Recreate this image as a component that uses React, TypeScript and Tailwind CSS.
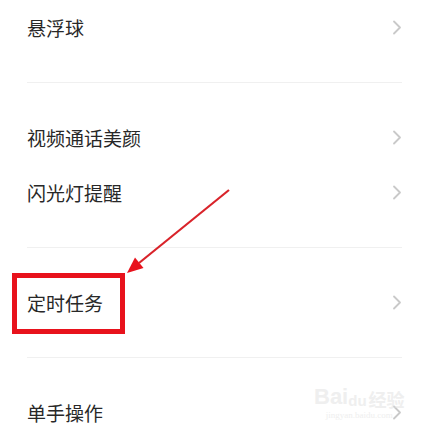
import React from 'react';

type Row = { label: string } | { divider: true };

const rows: Row[] = [
  { label: '悬浮球' },
  { divider: true },
  { label: '视频通话美颜' },
  { label: '闪光灯提醒' },
  { divider: true },
  { label: '定时任务' },
  { divider: true },
  { label: '单手操作' },
];

const Chevron: React.FC = () => (
  <svg width="10" height="15" viewBox="0 0 10 15" fill="none">
    <path d="M2 1.5 L8 7.5 L2 13.5" stroke="#c9c9c9" strokeWidth="1.8" strokeLinecap="round" strokeLinejoin="round" />
  </svg>
);

const App: React.FC = () => {
  return (
    <div
      className="relative h-[437px] w-[433px] overflow-hidden bg-white"
      style={{ fontFamily: '"Noto Sans CJK SC", "Noto Sans", sans-serif' }}
    >
      <div className="pl-[27px] pr-[31px]">
        {rows.map((row, i) =>
          'divider' in row ? (
            <div key={i} className="flex h-[55px] items-center">
              <div className="h-px w-full bg-[#f0f0f0]" />
            </div>
          ) : (
            <div key={i} className="flex h-[55px] items-center justify-between">
              <span className="text-[19px] leading-none text-[#282828]">{row.label}</span>
              <Chevron />
            </div>
          )
        )}
      </div>

      {/* annotation: red box */}
      <div className="absolute left-[12px] top-[273px] h-[61px] w-[113px] border-[5px] border-[#e8121c]" />

      {/* annotation: arrow */}
      <svg className="pointer-events-none absolute left-0 top-0" width="433" height="437">
        <line x1="229" y1="190" x2="139" y2="263" stroke="#d9232a" strokeWidth="2.2" />
        <polygon points="127,273 143.5,268 135,257.5" fill="#e8121c" />
      </svg>

      {/* watermark */}
      <div className="pointer-events-none absolute left-[314px] top-[386px] flex flex-col items-center opacity-50">
        <div className="flex items-end leading-none">
          <span className="text-[22px] font-bold text-[#e0e0e0]" style={{ fontFamily: '"Liberation Sans", sans-serif' }}>Bai</span>
          <span className="text-[15px] font-bold text-[#e0e0e0]" style={{ fontFamily: '"Liberation Sans", sans-serif' }}>du</span>
          <span className="ml-[2px] text-[18px] font-bold text-[#e0e0e0]">经验</span>
        </div>
        <span className="mt-[3px] text-[9px] leading-none text-[#e0e0e0]" style={{ fontFamily: '"Liberation Serif", serif' }}>jingyan.baidu.com</span>
      </div>
    </div>
  );
};

export default App;
